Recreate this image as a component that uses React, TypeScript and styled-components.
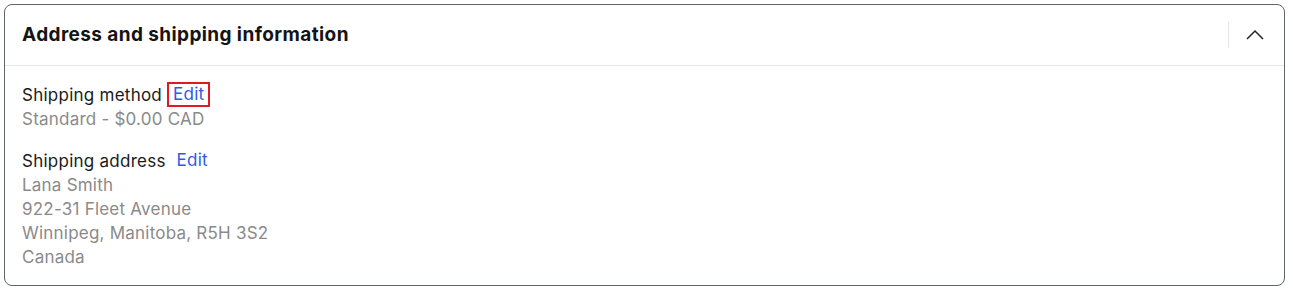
import React from "react";
import styled, { createGlobalStyle } from "styled-components";

const GlobalStyle = createGlobalStyle`
  html, body {
    margin: 0;
    padding: 0;
    background: #ffffff;
    font-family: Inter, "Noto Sans", sans-serif;
  }
`;

const Card = styled.section`
  margin: 4px 0 0 4px;
  width: 1281px;
  box-sizing: border-box;
  border: 1px solid #60656b;
  border-radius: 8px;
  background: #fff;
`;

const Header = styled.header`
  height: 59px;
  display: flex;
  align-items: center;
  padding: 0 16px 1px 17px;
  border-bottom: 1px solid #e4e6e8;
`;

const Title = styled.h2`
  flex: 1;
  margin: 0;
  font-size: 19px;
  font-weight: 700;
  color: #141414;
  letter-spacing: 0.4px;
`;

const Divider = styled.span`
  width: 1px;
  height: 26px;
  background: #e6e6e6;
  margin-right: 13px;
`;

const Toggle = styled.button`
  width: 26px;
  height: 26px;
  padding: 0;
  border: none;
  background: none;
  display: flex;
  align-items: center;
  justify-content: center;
  color: #222;
`;

const Body = styled.div`
  padding: 16px 17px 16px;
  display: flex;
  flex-direction: column;
  gap: 17px;
`;

const Block = styled.div`
  display: flex;
  flex-direction: column;
`;

const Label = styled.div`
  display: flex;
  align-items: center;
  font-size: 17px;
  line-height: 24px;
  letter-spacing: 0.25px;
  color: #1a1a1a;
`;

const EditLink = styled.a<{ $focused?: boolean }>`
  margin-left: 5px;
  padding: 0 4px;
  line-height: 21px;
  border: 2px solid ${(p) => (p.$focused ? "#e3191f" : "transparent")};
  color: #2d5be3;
  text-decoration: none;
  cursor: pointer;
`;

const Line = styled.div`
  font-size: 17px;
  line-height: 24px;
  letter-spacing: 0.22px;
  color: #8a8a8a;
`;

const sections = [
  {
    label: "Shipping method",
    focused: true,
    lines: ["Standard - $0.00 CAD"],
  },
  {
    label: "Shipping address",
    focused: false,
    lines: ["Lana Smith", "922-31 Fleet Avenue", "Winnipeg, Manitoba, R5H 3S2", "Canada"],
  },
];

export default function App() {
  return (
    <>
      <GlobalStyle />
      <Card>
        <Header>
          <Title>Address and shipping information</Title>
          <Divider />
          <Toggle aria-label="Collapse">
            <svg width="18" height="18" viewBox="0 0 18 18" fill="none">
              <path d="M1 13 9 5l8 8" stroke="currentColor" strokeWidth="1.5" />
            </svg>
          </Toggle>
        </Header>
        <Body>
          {sections.map((s) => (
            <Block key={s.label}>
              <Label>
                {s.label}
                <EditLink $focused={s.focused}>Edit</EditLink>
              </Label>
              {s.lines.map((l) => (
                <Line key={l}>{l}</Line>
              ))}
            </Block>
          ))}
        </Body>
      </Card>
    </>
  );
}
